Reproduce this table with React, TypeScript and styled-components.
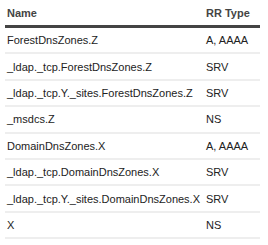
import React from "react";
import styled, { createGlobalStyle } from "styled-components";

const Global = createGlobalStyle`
  html, body { margin: 0; padding: 0; background: #fff; }
  body { font-family: "Liberation Sans", Arial, sans-serif; }
`;

const Wrap = styled.div`
  padding: 0 8px 0 5px;
`;

const Table = styled.table`
  width: 255px;
  border-collapse: collapse;
  font-size: 11px;
  color: #222;
`;

const Th = styled.th<{ $w?: number }>`
  text-align: left;
  font-weight: bold;
  color: #444;
  padding: 7px 2px 6px 2px;
  height: 11px;
  width: ${(p) => (p.$w ? `${p.$w}px` : "auto")};
  border-bottom: 3px solid #444;
`;

const Td = styled.td`
  padding: 0 2px;
  height: 24.4px;
  border-bottom: 2px solid #eee;
  white-space: nowrap;
`;

const rows: [string, string][] = [
  ["ForestDnsZones.Z", "A, AAAA"],
  ["_ldap._tcp.ForestDnsZones.Z", "SRV"],
  ["_ldap._tcp.Y._sites.ForestDnsZones.Z", "SRV"],
  ["_msdcs.Z", "NS"],
  ["DomainDnsZones.X", "A, AAAA"],
  ["_ldap._tcp.DomainDnsZones.X", "SRV"],
  ["_ldap._tcp.Y._sites.DomainDnsZones.X", "SRV"],
  ["X", "NS"],
];

export default function App() {
  return (
    <Wrap>
      <Global />
      <Table>
        <thead>
          <tr>
            <Th $w={195}>Name</Th>
            <Th>RR Type</Th>
          </tr>
        </thead>
        <tbody>
          {rows.map(([n, t]) => (
            <tr key={n}>
              <Td>{n}</Td>
              <Td>{t}</Td>
            </tr>
          ))}
        </tbody>
      </Table>
    </Wrap>
  );
}
